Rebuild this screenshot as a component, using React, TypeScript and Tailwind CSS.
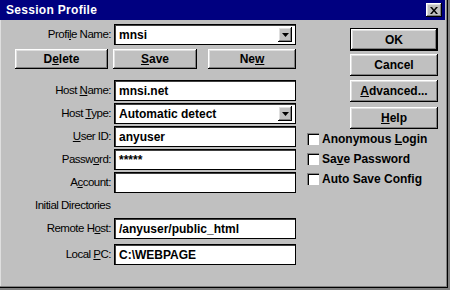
import React from 'react';

// Win95 look: bevels done with stacked inset shadows
const raised =
  'bg-[#c0c0c0] shadow-[inset_-1px_-1px_#000,inset_1px_1px_#fff,inset_-2px_-2px_#808080,inset_2px_2px_#dfdfdf]';
const field = 'bg-white border border-black shadow-[inset_1px_1px_#404040]';
const boldFont = "font-['Liberation_Sans',Arial,sans-serif] font-bold text-[12px] text-black";
const labelFont = "font-['Liberation_Sans',Arial,sans-serif] text-[11.5px] tracking-[-0.5px] text-black";

// underline the mnemonic letter at position idx
const mn = (text: string, idx?: number) =>
  idx === undefined ? (
    text
  ) : (
    <>
      {text.slice(0, idx)}
      <u className="underline-offset-[1px]">{text[idx]}</u>
      {text.slice(idx + 1)}
    </>
  );

const DropArrow = () => (
  <div className={`${raised} absolute right-[3px] top-[2px] flex h-[15px] w-[14px] items-center justify-center`}>
    <svg width="7" height="4" viewBox="0 0 7 4">
      <path d="M0 0h7L3.5 4z" fill="#000" />
    </svg>
  </div>
);

type RowProps = {
  label: string;
  u?: number;
  value?: string;
  combo?: boolean;
  className?: string;
};

const Row = ({ label, u, value = '', combo, className = '' }: RowProps) => (
  <div className={`flex h-[21px] items-center ${className}`}>
    <div className={`w-[111px] text-right ${labelFont}`}>{mn(label, u)}</div>
    <div className={`relative ml-[3px] flex h-full w-[182px] items-center pl-[4px] ${field} ${boldFont}`}>
      {value}
      {combo && <DropArrow />}
    </div>
  </div>
);

const Button = ({
  text,
  u,
  className = '',
  isDefault,
}: {
  text: string;
  u?: number;
  className?: string;
  isDefault?: boolean;
}) => (
  <div
    className={`flex items-center justify-center ${raised} ${boldFont} ${
      isDefault ? 'outline outline-1 outline-black' : ''
    } ${className}`}
  >
    {mn(text, u)}
  </div>
);

const Check = ({ text, u }: { text: string; u?: number }) => (
  <div className="flex h-[20px] items-center">
    <div className="h-[12px] w-[12px] bg-white shadow-[inset_1px_1px_#808080,inset_2px_2px_#000,inset_-1px_-1px_#fff]" />
    <div className={`ml-[3px] ${boldFont} text-[11.5px]`}>{mn(text, u)}</div>
  </div>
);

export default function App() {
  return (
    <div className="flex h-[290px] w-[450px] bg-[#808080]">
      <div className="flex h-[288px] w-[448px] flex-col bg-[#c0c0c0] shadow-[inset_-1px_-1px_#000,inset_-2px_-2px_#808080,inset_1px_0_#dfdfdf]">
        {/* title bar */}
        <div className="flex h-[20px] w-[445px] items-center justify-between bg-[#000080] pl-[6px] pr-[3px]">
          <span className={`${boldFont} text-white tracking-[0.3px]`}>Session Profile</span>
          <div className={`${raised} flex h-[14px] w-[16px] items-center justify-center`}>
            <svg width="8" height="7" viewBox="0 0 8 7">
              <path d="M0 0h2l2 2.5L6 0h2L5 3.5 8 7H6L4 4.5 2 7H0l3-3.5z" fill="#000" />
            </svg>
          </div>
        </div>

        <div className="flex pt-[4px]">
          {/* left column */}
          <div className="flex w-[307px] flex-col">
            <Row label="Profile Name:" u={5} value="mnsi" combo />
            <div className="mt-[4px] flex h-[20px]">
              <Button text="Delete" u={1} className="ml-[15px] w-[93px]" />
              <Button text="Save" u={0} className="ml-[5px] w-[84px]" />
              <Button text="New" u={2} className="ml-[11px] w-[88px]" />
            </div>
            <Row label="Host Name:" u={5} value="mnsi.net" className="mt-[11px]" />
            <Row label="Host Type:" u={5} value="Automatic detect" combo className="mt-[2px]" />
            <Row label="User ID:" u={0} value="anyuser" className="mt-[2px]" />
            <Row label="Password:" u={5} value="*****" className="mt-[2px]" />
            <Row label="Account:" u={1} className="mt-[2px]" />
            <div className={`mt-[5px] h-[14px] pl-[35px] leading-[14px] ${labelFont}`}>Initial Directories</div>
            <Row label="Remote Host:" u={8} value="/anyuser/public_html" className="mt-[6px]" />
            <Row label="Local PC:" u={6} value="C:\WEBPAGE" className="mt-[5px]" />
          </div>

          {/* right column */}
          <div className="flex w-[131px] flex-col">
            <Button text="OK" isDefault className="ml-[44px] mt-[5px] h-[21px] w-[86px]" />
            <Button text="Cancel" className="ml-[43px] mt-[4px] h-[22px] w-[88px]" />
            <Button text="Advanced..." u={0} className="ml-[43px] mt-[4px] h-[22px] w-[88px]" />
            <Button text="Help" u={0} className="ml-[43px] mt-[5px] h-[22px] w-[88px]" />
            <Check text="Anonymous Login" u={10} />
            <Check text="Save Password" u={2} />
            <Check text="Auto Save Config" />
          </div>
        </div>
      </div>
    </div>
  );
}
